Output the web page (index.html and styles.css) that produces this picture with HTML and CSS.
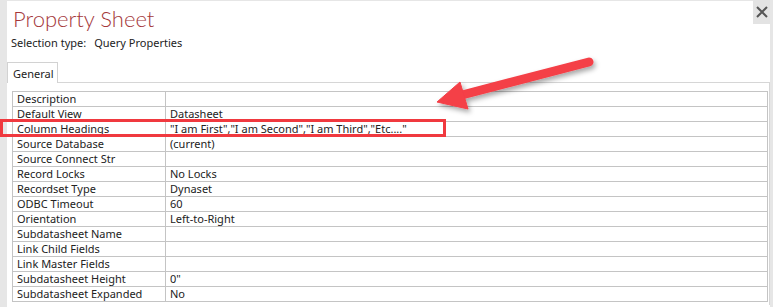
FILE: index.html
```html
<!DOCTYPE html>
<html lang="en">
<head>
    <meta charset="UTF-8">
    <title>Property Sheet</title>
    <link rel="stylesheet" href="styles.css">
</head>
<body>

    <div class="sheet">
        <!-- Header -->
        <div class="sheet-header">
            <h1 class="sheet-title">Property Sheet</h1>
            <button class="close-btn" aria-label="Close">
                <svg width="12" height="12" viewBox="0 0 12 12">
                    <path d="M1 1 L11 11 M11 1 L1 11" stroke="#555" stroke-width="2"/>
                </svg>
            </button>
        </div>
        <div class="selection-type">
            <span>Selection type:</span>
            <span>Query Properties</span>
        </div>

        <!-- Tabs -->
        <div class="tabs">
            <div class="tab active">General</div>
            <div class="tab-fill"></div>
        </div>

        <div class="tab-panel">
            <div class="props">
                <div class="prop"><div class="prop-name">Description</div><div class="prop-value"></div></div>
                <div class="prop"><div class="prop-name">Default View</div><div class="prop-value">Datasheet</div></div>
                <div class="prop"><div class="prop-name">Column Headings</div><div class="prop-value">"I am First","I am Second","I am Third","Etc...."</div></div>
                <div class="prop"><div class="prop-name">Source Database</div><div class="prop-value">(current)</div></div>
                <div class="prop"><div class="prop-name">Source Connect Str</div><div class="prop-value"></div></div>
                <div class="prop"><div class="prop-name">Record Locks</div><div class="prop-value">No Locks</div></div>
                <div class="prop"><div class="prop-name">Recordset Type</div><div class="prop-value">Dynaset</div></div>
                <div class="prop"><div class="prop-name">ODBC Timeout</div><div class="prop-value">60</div></div>
                <div class="prop"><div class="prop-name">Orientation</div><div class="prop-value">Left-to-Right</div></div>
                <div class="prop"><div class="prop-name">Subdatasheet Name</div><div class="prop-value"></div></div>
                <div class="prop"><div class="prop-name">Link Child Fields</div><div class="prop-value"></div></div>
                <div class="prop"><div class="prop-name">Link Master Fields</div><div class="prop-value"></div></div>
                <div class="prop"><div class="prop-name">Subdatasheet Height</div><div class="prop-value">0"</div></div>
                <div class="prop"><div class="prop-name">Subdatasheet Expanded</div><div class="prop-value">No</div></div>
            </div>
        </div>
    </div>

    <!-- Annotation: highlight box + arrow -->
    <div class="highlight-box"></div>
    <svg class="arrow" width="773" height="307" viewBox="0 0 773 307">
        <defs>
            <filter id="shadow" x="-20%" y="-50%" width="140%" height="200%">
                <feDropShadow dx="2" dy="3" stdDeviation="2.5" flood-color="#000" flood-opacity="0.35"/>
            </filter>
        </defs>
        <g filter="url(#shadow)" fill="#f43f47" stroke="#f43f47">
            <line x1="589" y1="62" x2="462" y2="95" stroke-width="9" stroke-linecap="round"/>
            <polygon points="437,102 460,82 468,109" stroke-width="1" stroke-linejoin="round"/>
        </g>
    </svg>

</body>
</html>
```

FILE: styles.css
```css
/* Page frame */
html, body {
    margin: 0;
    height: 100%;
}

body {
    width: 773px;
    height: 307px;
    overflow: hidden;
    background: #e6e6e6;
    font-family: "Noto Sans", "Open Sans", sans-serif;
    font-size: 11px;
    color: #222;
    position: relative;
}

/* White property sheet pane */
.sheet {
    margin: 1px 3px 0 7px;
    height: 306px;
    background: #fff;
}

.sheet-header {
    display: flex;
    justify-content: space-between;
    align-items: flex-start;
}

.sheet-title {
    margin: 0;
    padding: 4px 0 0 6px;
    font-family: "Lato", "Open Sans", sans-serif;
    font-weight: 300;
    font-size: 22px;
    line-height: 28px;
    color: #a4373a;
}

.close-btn {
    width: 17px;
    height: 24px;
    margin-top: -1px;
    border: none;
    padding: 0;
    background: #e3e3e3;
    display: flex;
    align-items: center;
    justify-content: center;
}

.selection-type {
    padding: 3px 0 0 4px;
    line-height: 14px;
    display: flex;
    gap: 8px;
}

/* Tab strip */
.tabs {
    display: flex;
    margin-top: 12px;
    height: 21px;
}

.tab {
    padding: 2px 6px 0 5px;
    border: 1px solid #d2d2d2;
    border-bottom: none;
    line-height: 17px;
    width: 38px;
}

.tab-fill {
    flex: 1;
    border-bottom: 1px solid #d6d6d6;
}

.tab-panel {
    padding: 8px 0 0 5px;
    border-right: 1px solid #d6d6d6;
    height: 214px;
}

/* Property grid */
.props {
    width: 754px;
    border: 1px solid #c4c4c4;
    border-bottom: none;
}

.prop {
    display: grid;
    grid-template-columns: 153px 1fr;
    height: 14px;
    border-bottom: 1px solid #c4c4c4;
}

.prop-name,
.prop-value {
    padding-left: 4px;
    line-height: 14px;
    white-space: nowrap;
}

.prop-name {
    border-right: 1px solid #c4c4c4;
}

/* Annotation overlay */
.highlight-box {
    position: absolute;
    left: 0;
    top: 119px;
    width: 440px;
    height: 12px;
    border: 3px solid #f0393f;
}

.arrow {
    position: absolute;
    left: 0;
    top: 0;
    pointer-events: none;
}
```
